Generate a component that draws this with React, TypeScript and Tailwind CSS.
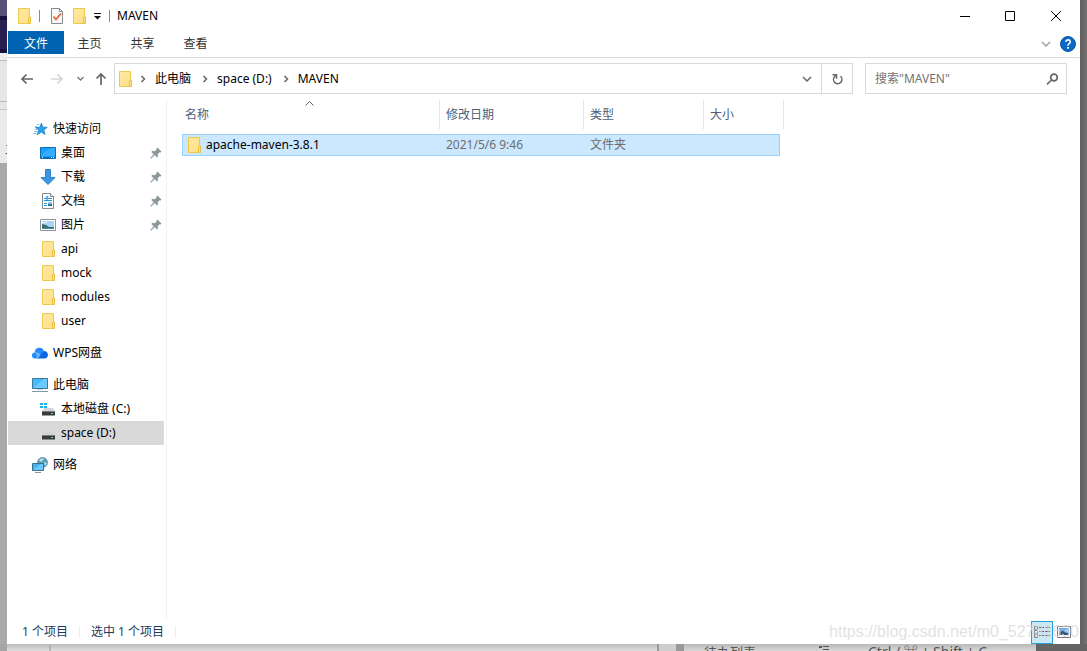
import React from "react";

const FONT = "font-['Noto_Sans','Noto_Sans_CJK_SC',sans-serif]";

function Folder() {
  return (
    <svg width="16" height="18" viewBox="0 0 16 18" className="shrink-0" aria-hidden="true">
      <defs>
        <linearGradient id="folder" x1="0" y1="0" x2="1" y2="1">
          <stop offset="0" stopColor="#ffe9a6" />
          <stop offset="1" stopColor="#ffdf80" />
        </linearGradient>
      </defs>
      <path d="M2.500 1.500h11v15h-11z" fill="url(#folder)" stroke="#ecc84c" />
      <path d="M12.500 16.500v-5.500l1-1h1v6.500z" fill="#ffe28c" stroke="#e8c040" />
    </svg>
  );
}

function Pin() {
  return (
    <svg width="12" height="12" viewBox="0 0 12 12" aria-hidden="true">
      <path d="M7.500.5l4 4-.8.9-1-.2-2 2 .3 2.300-.9.9-2.300-2.300L1 11.700l-.7-.7 3.300-3.800L1.300 4.900l.9-.9 2.500.3 2-2-.2-1z" fill="#8c979e" />
    </svg>
  );
}

function Star() {
  return (
    <svg width="16" height="16" viewBox="0 0 16 16" aria-hidden="true">
      <path d="M9.500 2l1.300 4.200 4.500.1-3.500 2.700 1.300 4.500L9.300 11l-4 2.700 1.300-4.600L3.500 6.300l4.400-.1z" fill="#2aa0ea" stroke="#1377c0" strokeWidth=".7" />
      <path d="M5 3.500h2.500M3 5.500h2M3 8.500h2.500M2 10.500h3.500M1 12.500h3.500" stroke="#7cc4f0" />
    </svg>
  );
}

function Desktop() {
  return (
    <svg width="16" height="16" viewBox="0 0 16 16" aria-hidden="true">
      <path d="M.5 2.500h15v11H.5z" fill="#19a0fb" stroke="#0b6cb8" />
      <path d="M1 10L11 3h4v8H1z" fill="#35adff" />
      <path d="M1 12.500h14" stroke="#0a69b5" />
      <path d="M2 12.500h1M11 12.500h1M13 12.500h1" stroke="#fff" />
    </svg>
  );
}

function Download() {
  return (
    <svg width="16" height="16" viewBox="0 0 16 16" aria-hidden="true">
      <path d="M5.500.5h5v8h4.500L8 15.500 1 8.500h4.500z" fill="#3c96e4" stroke="#2c7fca" />
    </svg>
  );
}

function Document() {
  return (
    <svg width="16" height="16" viewBox="0 0 16 16" aria-hidden="true">
      <path d="M2.500.5h8l3 3v12h-11z" fill="#fff" stroke="#85898c" />
      <path d="M10.500.5v3h3" fill="#eee" stroke="#85898c" />
      <path d="M4 5.500h8M4 7.500h8M4 10.500h3M4 12.500h3M6.500 3.500h2M7 3v4" stroke="#1f93e0" />
      <path d="M8 9h4v2H8z" fill="#8fc3ea" />
      <path d="M8 11h4v2H8z" fill="#2f6f96" />
    </svg>
  );
}

function Picture() {
  return (
    <svg width="16" height="16" viewBox="0 0 16 16" aria-hidden="true">
      <path d="M.5 2.500h15v11H.5z" fill="#fff" stroke="#929292" />
      <path d="M2 4h12v8H2z" fill="#a9d3f4" />
      <path d="M2 7l4 1 3 2h5v2H2z" fill="#35706b" />
      <path d="M2 11h12v1H2z" fill="#4b83ad" />
      <path d="M2 5h5v1H2z" fill="#e8f4fc" />
    </svg>
  );
}

function Cloud() {
  return (
    <svg width="16" height="16" viewBox="0 0 16 16" aria-hidden="true">
      <path d="M3 13.500a3 3 0 0 1-.2-6A4.600 4.600 0 0 1 11.800 6L7 13.500z" fill="#2489ff" />
      <path d="M6 13.500l5-7a3.400 3.400 0 0 1 4.900 3.200 3.800 3.800 0 0 1-3.700 3.800z" fill="#0b65e5" />
      <path d="M3 7.500a5 5 0 0 1 5.500 2.200L6 13.500H4.500A6 6 0 0 0 3 7.500z" fill="#65b6ff" />
    </svg>
  );
}

function Computer() {
  return (
    <svg width="16" height="16" viewBox="0 0 16 16" aria-hidden="true">
      <path d="M.5 1.500h15v10H.5z" fill="#45baff" stroke="#3b7894" />
      <path d="M1 11L12 2h3v9z" fill="#6bcbff" />
      <path d="M5 12.500h6" stroke="#c5d2da" />
      <path d="M0 14.500h16" stroke="#7f99a9" />
    </svg>
  );
}

function Drive({ system = false }: { system?: boolean }) {
  return (
    <svg width="16" height="16" viewBox="0 0 16 16" aria-hidden="true">
      <path d="M4 7h9l2 3.500H2z" fill="#d2d5d8" />
      <path d="M2 10.500h13v4H2z" fill="#383b3d" />
      <path d="M2 10.500h13" stroke="#777b7d" />
      <path d="M11 12.500h2" stroke="#4bea63" />
      {system && <path d="M0 2h3v2H0zM4 2h3v2H4zM0 5h3v2H0zM4 5h3v2H4z" fill="#18b3ef" />}
    </svg>
  );
}

function Network() {
  return (
    <svg width="16" height="16" viewBox="0 0 16 16" aria-hidden="true">
      <circle cx="10.500" cy="5.500" r="5" fill="#5f9dbc" stroke="#528399" strokeWidth=".7" />
      <path d="M7 3q3-3 5-1L9 5zM12 5l3 1-2 3z" fill="#b8e4e7" />
      <path d="M.5 6.500h11v7H.5z" fill="#45b3f2" stroke="#38718e" />
      <path d="M1 13l8-6h2v6z" fill="#6dcbff" />
      <path d="M3 15.500h6" stroke="#8197a4" />
    </svg>
  );
}

function Chevron({ down = false, color = "#666" }: { down?: boolean; color?: string }) {
  return (
    <svg width="10" height="10" viewBox="0 0 10 10" fill="none" stroke={color} strokeWidth="1.500" aria-hidden="true">
      <path d={down ? "M1 3l4 4 4-4" : "M3.500 2l3 3-3 3"} />
    </svg>
  );
}

type Item = { label: string; icon: React.ReactNode; pinned?: boolean; root?: boolean; active?: boolean };

const groups: Item[][] = [
  [
    { label: "快速访问", icon: <Star />, root: true },
    { label: "桌面", icon: <Desktop />, pinned: true },
    { label: "下载", icon: <Download />, pinned: true },
    { label: "文档", icon: <Document />, pinned: true },
    { label: "图片", icon: <Picture />, pinned: true },
    { label: "api", icon: <Folder /> },
    { label: "mock", icon: <Folder /> },
    { label: "modules", icon: <Folder /> },
    { label: "user", icon: <Folder /> },
  ],
  [{ label: "WPS网盘", icon: <Cloud />, root: true }],
  [
    { label: "此电脑", icon: <Computer />, root: true },
    { label: "本地磁盘 (C:)", icon: <Drive system /> },
    { label: "space (D:)", icon: <Drive />, active: true },
  ],
  [{ label: "网络", icon: <Network />, root: true }],
];

function TitleBar() {
  return (
    <header className="flex h-[31px] shrink-0 items-center pl-[9px]">
      <Folder />
      <span className="ml-[7px] h-3 w-px bg-[#8a8a8a]" />
      <button aria-label="属性" className="ml-[9px]">
        <svg width="16" height="18" viewBox="0 0 16 18" fill="none" aria-hidden="true">
          <path d="M2.500 1.500h8l3 3v12h-11z" fill="#f7f8f9" stroke="#878b8e" />
          <path d="M10.500 1.500v3h3" stroke="#878b8e" />
          <path d="M4.500 9.500l2.500 3 5-6" stroke="#e9622d" strokeWidth="1.700" />
        </svg>
      </button>
      <button aria-label="新建文件夹" className="ml-[6px]"><Folder /></button>
      <button aria-label="自定义快速访问工具栏" className="ml-[6px]">
        <svg width="8" height="8" viewBox="0 0 8 8" aria-hidden="true">
          <path d="M1 1h7v1H1zM1 4h7L4.500 7.500z" fill="#111" />
        </svg>
      </button>
      <span className="ml-2 h-3 w-px bg-[#8a8a8a]" />
      <h1 className="ml-[7px] text-xs">MAVEN</h1>
      <div className="mr-px ml-auto flex">
        <button aria-label="最小化" className="flex h-[30px] w-11 items-center justify-center">
          <svg width="10" height="10" aria-hidden="true"><path d="M0 5.500h10" stroke="#000" /></svg>
        </button>
        <button aria-label="最大化" className="flex h-[30px] w-[46px] items-center justify-center">
          <svg width="10" height="10" aria-hidden="true"><path d="M.5.5h9v9h-9z" fill="none" stroke="#000" /></svg>
        </button>
        <button aria-label="关闭" className="flex h-[30px] w-[46px] items-center justify-center">
          <svg width="10" height="10" aria-hidden="true"><path d="M0 0l10 10M10 0L0 10" stroke="#000" /></svg>
        </button>
      </div>
    </header>
  );
}

function Ribbon() {
  return (
    <div className="flex h-[27px] shrink-0 items-start border-b border-[#dadbdc] pl-px">
      <button className="h-[23px] w-14 bg-[#0063b1] pt-[2px] text-white">文件</button>
      {["主页", "共享", "查看"].map((t) => (
        <button key={t} className="h-[23px] w-[53px] pt-[2px] pr-[2px] text-[#333]">{t}</button>
      ))}
      <button aria-label="展开功能区" className="ml-auto flex h-[26px] items-center"><Chevron down color="#a0a0a0" /></button>
      <button aria-label="帮助" className="mr-1 ml-[9px] flex h-[26px] items-center">
        <svg width="16" height="16" viewBox="0 0 16 16" fill="none" aria-hidden="true">
          <circle cx="8" cy="8" r="7.500" fill="#0869c7" stroke="#1558a0" />
          <path d="M5.700 5.800Q6 3.900 8 3.900t2.300 1.800q0 1.100-1.200 1.900T8 9.700" stroke="#fff" strokeWidth="1.600" />
          <path d="M7.100 11h1.800v1.800H7.100z" fill="#fff" />
        </svg>
      </button>
    </div>
  );
}

function Arrow({ d, color }: { d: string; color: string }) {
  return (
    <svg width="14" height="14" viewBox="0 0 14 14" fill="none" stroke={color} strokeWidth="1.700" aria-hidden="true"><path d={d} /></svg>
  );
}

function AddressBar() {
  return (
    <div className="flex h-[41px] shrink-0 items-center px-[13px]">
      <button aria-label="后退"><Arrow color="#666" d="M13 7H2M6.500 2.500L2 7l4.500 4.500" /></button>
      <button aria-label="前进" className="ml-4"><Arrow color="#d5d5d5" d="M1 7h11M7.500 2.500L12 7l-4.500 4.500" /></button>
      <button aria-label="最近位置" className="ml-[13px]">
        <svg width="7" height="7" viewBox="0 0 7 7" fill="none" stroke="#777" strokeWidth="1.400" aria-hidden="true"><path d="M.5 2l3 3 3-3" /></svg>
      </button>
      <button aria-label="上移" className="ml-[10px]"><Arrow color="#666" d="M7 13V2M2.500 6.500L7 2l4.500 4.500" /></button>
      <nav aria-label="路径" className="ml-[6px] flex h-[31px] min-w-0 flex-1 items-center border border-[#d9d9d9]">
        <span className="ml-[2px] flex"><Folder /></span>
        <ol className="flex flex-1 items-center">
          {["此电脑", "space (D:)", "MAVEN"].map((t) => (
            <li key={t} className="flex items-center">
              <span className="mr-[7px] ml-[5px] flex"><Chevron /></span>
              <a href="#" className="mr-1">{t}</a>
            </li>
          ))}
        </ol>
        <button aria-label="以前的位置" className="flex w-7 justify-center"><Chevron down /></button>
        <button aria-label="刷新" className="flex h-full w-[31px] items-center justify-center border-l border-[#d9d9d9]">
          <svg width="12" height="12" viewBox="0 0 12 12" fill="none" stroke="#666" strokeWidth="1.500" aria-hidden="true">
            <path d="M9.500 3.300A4.200 4.200 0 1 1 3.500 3.700L5.300 2" />
            <path d="M1.500 1.700h4v4" />
          </svg>
        </button>
      </nav>
      <label className="ml-3 flex h-[31px] w-[202px] items-center border border-[#d9d9d9] pr-[7px] pl-[9px]">
        <input type="search" aria-label="搜索" placeholder={'搜索"MAVEN"'} className="min-w-0 flex-1 outline-none placeholder:text-[#737373]" />
        <svg width="13" height="12" viewBox="0 0 13 12" fill="none" stroke="#666" strokeWidth="1.700" aria-hidden="true">
          <circle cx="8" cy="4.500" r="3.300" /><path d="M5.500 7L1 11.300" />
        </svg>
      </label>
    </div>
  );
}

function Sidebar() {
  return (
    <nav aria-label="导航窗格" className="flex w-40 shrink-0 flex-col gap-2 border-r border-[#f3f3f3] pt-[18px]">
      {groups.map((g, i) => (
        <ul key={i}>
          {g.map((it) => (
            <li key={it.label}>
              <a href="#" className={`mr-[2px] ml-px flex h-6 items-center ${it.root ? "pl-6" : "pl-8"} ${it.active ? "bg-[#d9d9d9]" : ""}`}>
                <span className="flex w-4 shrink-0 justify-center">{it.icon}</span>
                <span className="ml-[5px]">{it.label}</span>
                {it.pinned && <span className="mr-[2px] ml-auto"><Pin /></span>}
              </a>
            </li>
          ))}
        </ul>
      ))}
    </nav>
  );
}

function FileList() {
  const cell = "flex h-[22px] items-center border-y border-[#99d1ff] bg-[#cce8ff]";
  const head = "h-[29px] border-r border-[#e5e5e5] p-0 text-left font-normal";
  return (
    <main className="min-w-0 flex-1 pt-px pl-[15px]">
      <table className="w-[602px] table-fixed border-separate border-spacing-0">
        <colgroup>
          <col className="w-[258px]" /><col className="w-36" /><col className="w-[120px]" /><col className="w-20" />
        </colgroup>
        <thead className="text-[#4c607a]">
          <tr>
            <th className={`${head} relative`}>
              <button className="pl-[3px]">名称</button>
              <svg width="9" height="5" viewBox="0 0 9 5" fill="none" stroke="#666" className="absolute top-[1px] left-[123px]" aria-hidden="true"><path d="M.5 4.500l4-4 4 4" /></svg>
            </th>
            <th className={head}><button className="pl-[6px]">修改日期</button></th>
            <th className={head}><button className="pl-[6px]">类型</button></th>
            <th className={head}><button className="pl-[6px]">大小</button></th>
          </tr>
        </thead>
        <tbody>
          <tr className="text-[#6d6d6d]">
            <td className="p-0 pt-[5px]">
              <div className={`${cell} border-l pl-[3px] text-black`}><Folder /><span className="ml-1">apache-maven-3.8.1</span></div>
            </td>
            <td className="p-0 pt-[5px]"><div className={`${cell} pl-[6px]`}>2021/5/6 9:46</div></td>
            <td className="p-0 pt-[5px]"><div className={`${cell} pl-[6px]`}>文件夹</div></td>
            <td className="p-0 pt-[5px]"><div className={`${cell} mr-1 border-r`} /></td>
          </tr>
        </tbody>
      </table>
    </main>
  );
}

function StatusBar() {
  return (
    <footer className="relative flex h-6 shrink-0 items-center pl-[15px] text-[#1e395b]">
      <span>1 个项目</span>
      <span className="mx-[11px] h-3 w-px bg-[#eee]" />
      <span>选中 1 个项目</span>
      <span className="ml-[11px] h-3 w-px bg-[#eee]" />
      <button aria-label="详细信息" className="ml-auto flex h-[23px] w-[22px] items-center justify-center border border-[#26a0da] bg-[#cbe8f6]">
        <svg width="16" height="14" viewBox="0 0 16 14" fill="none" aria-hidden="true">
          <path d="M.5 1.500h3v3h-3zM.5 5.500h3v3h-3zM.5 9.500h3v3h-3z" fill="#fff" stroke="#858585" />
          <path d="M5 2.500h5M11 2.500h5M5 6.500h5M11 6.500h5M5 10.500h5M11 10.500h5" stroke="#666" />
          <path d="M1.500 3h1M1.500 11h1" stroke="#bb4545" />
        </svg>
      </button>
      <button aria-label="大缩略图" className="mr-[9px] ml-1">
        <svg width="14" height="12" viewBox="0 0 14 12" aria-hidden="true">
          <path d="M.5.5h13v11H.5z" fill="#fff" stroke="#777" />
          <path d="M2 2h10v7H2z" fill="#74aee5" /><path d="M2 6l4-1 3 2h3v2H2z" fill="#285581" />
        </svg>
      </button>
      <span className="pointer-events-none absolute right-px bottom-0 font-['Liberation_Sans',sans-serif] text-base leading-6 whitespace-nowrap text-[#dadada]/80">
        https://blog.csdn.net/m0_52781630
      </span>
    </footer>
  );
}

export default function App() {
  return (
    <div className={`flex h-screen flex-col overflow-hidden bg-[#707070] text-xs leading-4 text-black ${FONT}`}>
      <div className="flex min-h-0 flex-1">
        <div className="flex w-[7px] shrink-0 flex-col overflow-hidden bg-[#a9a9a9]">
          <div className="h-4 shrink-0 bg-[#575078]" />
          <div className="h-[37px] shrink-0 border-y-4 border-[#17113d] bg-[#292052]" />
          <div className="h-2 shrink-0 border-b border-[#bbb] bg-[#ededed]" />
          <div className="h-[41px] shrink-0 border-b border-[#bbb] bg-[#e6e6e6]" />
          <div className="h-2 shrink-0 border-b border-[#c8c8c8] bg-[#e6e6e6]" />
          <div className="flex h-[53px] shrink-0 items-center bg-[#eaeaea] pt-6 text-[#444]"><span className="ml-[5px]">主</span></div>
        </div>
        <section aria-label="MAVEN" className="flex min-w-0 flex-1 flex-col bg-white">
          <TitleBar />
          <Ribbon />
          <AddressBar />
          <div className="flex min-h-0 flex-1">
            <Sidebar />
            <FileList />
          </div>
          <StatusBar />
        </section>
        <div className="w-[7px] shrink-0 bg-linear-to-r from-[#5f5f5f] to-[#737373]" />
      </div>
      <div className="flex h-[7px] shrink-0 overflow-hidden text-[#555]">
        <div className="w-[7px] shrink-0 bg-[#a5a5a5]" />
        <div className="w-[44px] shrink-0 border-r-2 border-[#b5b5b5] bg-linear-to-b from-[#bcbcbc] to-[#dedede]" />
        <div className="flex-1 bg-linear-to-b from-[#bcbcbc] to-[#dedede]" />
        <div className="w-[27px] shrink-0 border-r-8 border-l-2 border-[#999] bg-[#cecece]" />
        <div className="flex w-[352px] shrink-0 bg-linear-to-b from-[#b8b8b8] to-[#d8d8d8] pl-5 leading-4">
          <span className="w-[115px] text-[13px]">待办列表</span>
          <span className="w-[49px]">
            <svg width="12" height="7" viewBox="0 0 12 7" aria-hidden="true"><path d="M0 2h3v2H0zM4 2h6v1H4zM4 5h6v1H4z" fill="#555" /></svg>
          </span>
          <span className="text-sm leading-4">Ctrl / ⌘ + Shift + C</span>
        </div>
        <div className="w-[51px] shrink-0 bg-[#656565]" />
      </div>
    </div>
  );
}
